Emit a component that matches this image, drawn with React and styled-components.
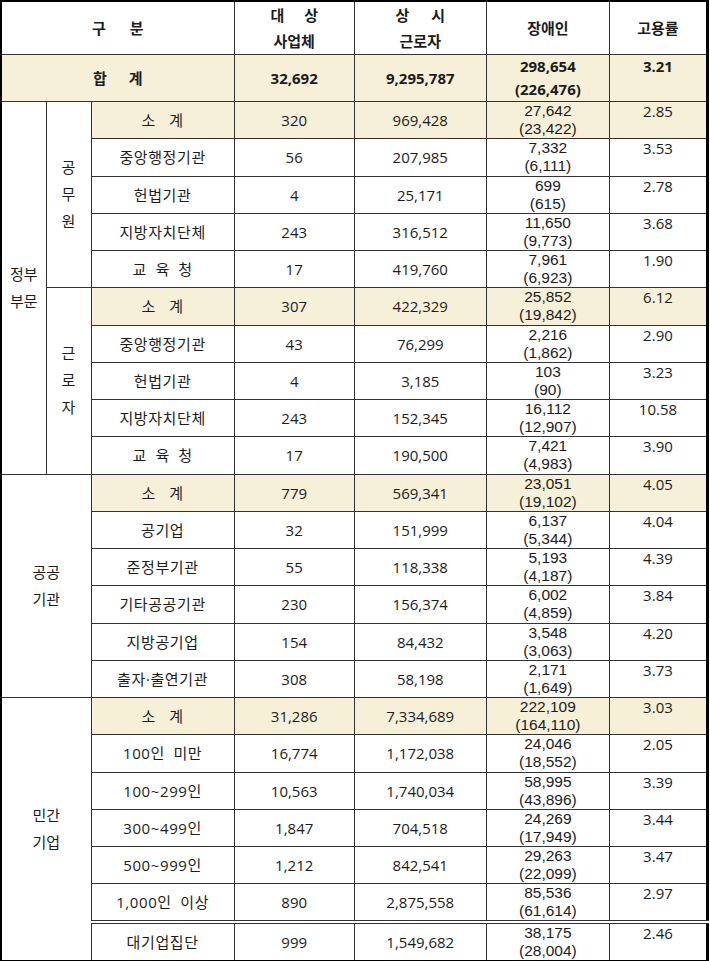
import React from "react";
import styled, { createGlobalStyle } from "styled-components";

const GlobalStyle = createGlobalStyle`
  body {
    margin: 0;
    background: #fff;
    font-family: "Open Sans", "Noto Sans CJK KR", sans-serif;
    color: #1c1c1c;
  }
`;

const CREAM = "#f6f0d9";

const Table = styled.table`
  width: 709px;
  table-layout: fixed;
  border-collapse: collapse;
  border: 2px solid #000;
  border-right-width: 3px;
  font-size: 15px;
`;

const HeadRow = styled.tr`
  height: 52px;
`;

const TotalRow = styled.tr`
  height: 47px;
  background: ${CREAM};
`;

const Row = styled.tr`
  height: 37.26px;
  background: ${(p) => (p.$sub ? CREAM : "#fff")};
`;

const Th = styled.th`
  border: 1px solid #333;
  padding: 0;
  font-weight: 700;
  font-size: 15px;
  line-height: 26px;
  text-align: center;
  vertical-align: middle;
`;

const Td = styled.td`
  border: 1px solid #333;
  padding: 0;
  text-align: center;
  vertical-align: ${(p) => (p.$top ? "top" : "middle")};
  line-height: ${(p) => p.$lh || "18px"};
  font-weight: ${(p) => (p.$bold ? 700 : 400)};
  background: ${(p) => (p.$group ? "#fff" : "inherit")};
  ${(p) => p.$double && "border-top: 4px double #333;"}
`;

const PairCell = styled(Td)`
  font-family: "Liberation Sans", "Noto Sans CJK KR", sans-serif;
  font-size: 15.5px;
`;

const GroupLabel = styled.span`
  display: inline-block;
  line-height: 27px;
  font-size: 15px;
`;

const Spaced = styled.span`
  word-spacing: ${(p) => p.$gap || 4}px;
  white-space: pre;
`;

const Label = styled.span`
  font-size: 15px;
  letter-spacing: 0.6px;
`;

const sections = [
  {
    name: "정부\n부문",
    subs: [
      {
        name: "공\n무\n원",
        rows: [
          ["소 계", "320", "969,428", "27,642", "(23,422)", "2.85", true],
          ["중앙행정기관", "56", "207,985", "7,332", "(6,111)", "3.53"],
          ["헌법기관", "4", "25,171", "699", "(615)", "2.78"],
          ["지방자치단체", "243", "316,512", "11,650", "(9,773)", "3.68"],
          ["교 육 청", "17", "419,760", "7,961", "(6,923)", "1.90"],
        ],
      },
      {
        name: "근\n로\n자",
        rows: [
          ["소 계", "307", "422,329", "25,852", "(19,842)", "6.12", true],
          ["중앙행정기관", "43", "76,299", "2,216", "(1,862)", "2.90"],
          ["헌법기관", "4", "3,185", "103", "(90)", "3.23"],
          ["지방자치단체", "243", "152,345", "16,112", "(12,907)", "10.58"],
          ["교 육 청", "17", "190,500", "7,421", "(4,983)", "3.90"],
        ],
      },
    ],
  },
  {
    name: "공공\n기관",
    rows: [
      ["소 계", "779", "569,341", "23,051", "(19,102)", "4.05", true],
      ["공기업", "32", "151,999", "6,137", "(5,344)", "4.04"],
      ["준정부기관", "55", "118,338", "5,193", "(4,187)", "4.39"],
      ["기타공공기관", "230", "156,374", "6,002", "(4,859)", "3.84"],
      ["지방공기업", "154", "84,432", "3,548", "(3,063)", "4.20"],
      ["출자·출연기관", "308", "58,198", "2,171", "(1,649)", "3.73"],
    ],
  },
  {
    name: "민간\n기업",
    rows: [
      ["소 계", "31,286", "7,334,689", "222,109", "(164,110)", "3.03", true],
      ["100인 미만", "16,774", "1,172,038", "24,046", "(18,552)", "2.05"],
      ["100~299인", "10,563", "1,740,034", "58,995", "(43,896)", "3.39"],
      ["300~499인", "1,847", "704,518", "24,269", "(17,949)", "3.44"],
      ["500~999인", "1,212", "842,541", "29,263", "(22,099)", "3.47"],
      ["1,000인 이상", "890", "2,875,558", "85,536", "(61,614)", "2.97"],
      ["대기업집단", "999", "1,549,682", "38,175", "(28,004)", "2.46", false, true],
    ],
  },
];

const gapFor = (label) => (label === "소 계" ? 9 : 4);

function multiline(text) {
  const parts = text.split("\n");
  return parts.map((p, i) => (
    <React.Fragment key={i}>
      {p}
      {i < parts.length - 1 && <br />}
    </React.Fragment>
  ));
}

function DataCells({ row }) {
  const [label, firms, workers, dis, disPrev, rate, , dbl] = row;
  return (
    <>
      <Td $double={dbl}>
        <Label>
          <Spaced $gap={gapFor(label)}>{label}</Spaced>
        </Label>
      </Td>
      <Td $double={dbl}>{firms}</Td>
      <Td $double={dbl}>{workers}</Td>
      <PairCell $top $double={dbl}>
        {dis}
        <br />
        {disPrev}
      </PairCell>
      <Td $top $double={dbl}>{rate}</Td>
    </>
  );
}

export default function App() {
  const body = [];
  sections.forEach((sec, si) => {
    if (sec.subs) {
      const total = sec.subs.reduce((n, s) => n + s.rows.length, 0);
      sec.subs.forEach((sub, ji) => {
        sub.rows.forEach((row, ri) => {
          body.push(
            <Row key={`${si}-${ji}-${ri}`} $sub={row[6]}>
              {ji === 0 && ri === 0 && (
                <Td rowSpan={total} $group>
                  <GroupLabel>{multiline(sec.name)}</GroupLabel>
                </Td>
              )}
              {ri === 0 && (
                <Td rowSpan={sub.rows.length} $group>
                  <GroupLabel>{multiline(sub.name)}</GroupLabel>
                </Td>
              )}
              <DataCells row={row} />
            </Row>
          );
        });
      });
    } else {
      sec.rows.forEach((row, ri) => {
        body.push(
          <Row key={`${si}-${ri}`} $sub={row[6]}>
            {ri === 0 && (
              <Td rowSpan={sec.rows.length} colSpan={2} $group>
                <GroupLabel>{multiline(sec.name)}</GroupLabel>
              </Td>
            )}
            <DataCells row={row} />
          </Row>
        );
      });
    }
  });

  return (
    <>
      <GlobalStyle />
      <Table>
        <colgroup>
          <col style={{ width: 45 }} />
          <col style={{ width: 45 }} />
          <col style={{ width: 143 }} />
          <col style={{ width: 120 }} />
          <col style={{ width: 132 }} />
          <col style={{ width: 123 }} />
          <col style={{ width: 98 }} />
        </colgroup>
        <thead>
          <HeadRow>
            <Th colSpan={3}>
              <Spaced $gap={20}>구 분</Spaced>
            </Th>
            <Th>
              <Spaced $gap={16}>대 상</Spaced>
              <br />
              사업체
            </Th>
            <Th>
              <Spaced $gap={18}>상 시</Spaced>
              <br />
              근로자
            </Th>
            <Th>장애인</Th>
            <Th>고용률</Th>
          </HeadRow>
        </thead>
        <tbody>
          <TotalRow>
            <Td colSpan={3} $bold>
              <Spaced $gap={18}>합 계</Spaced>
            </Td>
            <Td $bold>32,692</Td>
            <Td $bold>9,295,787</Td>
            <Td $bold $top $lh="23px">
              298,654
              <br />
              (226,476)
            </Td>
            <Td $bold $top $lh="23px">3.21</Td>
          </TotalRow>
          {body}
        </tbody>
      </Table>
    </>
  );
}
